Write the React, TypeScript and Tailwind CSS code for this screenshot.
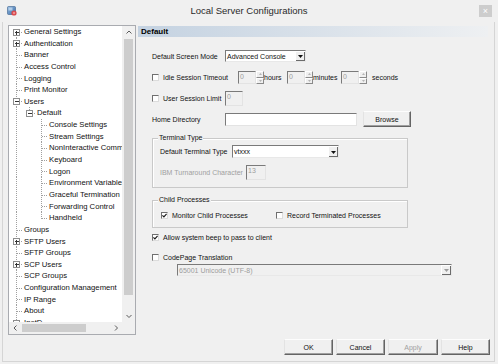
import React from "react";

type Node = { label: string; level: 0 | 1 | 2; exp?: "+" | "-"; last?: boolean };

const rows: Node[] = [
  { label: "General Settings", level: 0, exp: "+" },
  { label: "Authentication", level: 0, exp: "+" },
  { label: "Banner", level: 0 },
  { label: "Access Control", level: 0 },
  { label: "Logging", level: 0 },
  { label: "Print Monitor", level: 0 },
  { label: "Users", level: 0, exp: "-" },
  { label: "Default", level: 1, exp: "-", last: true },
  { label: "Console Settings", level: 2 },
  { label: "Stream Settings", level: 2 },
  { label: "NonInteractive Commands", level: 2 },
  { label: "Keyboard", level: 2 },
  { label: "Logon", level: 2 },
  { label: "Environment Variables", level: 2 },
  { label: "Graceful Termination", level: 2 },
  { label: "Forwarding Control", level: 2 },
  { label: "Handheld", level: 2, last: true },
  { label: "Groups", level: 0 },
  { label: "SFTP Users", level: 0, exp: "+" },
  { label: "SFTP Groups", level: 0 },
  { label: "SCP Users", level: 0, exp: "+" },
  { label: "SCP Groups", level: 0 },
  { label: "Configuration Management", level: 0 },
  { label: "IP Range", level: 0 },
  { label: "About", level: 0 },
  { label: "InetD", level: 0, exp: "+" },
];

const RH = 11.64;

function TreeRow({ node, i, h }: { node: Node; i: number; h: number }) {
  const { label, level, exp } = node;
  const mid = Math.floor(h / 2) + 0.5;
  const X = [7.5, 20.5, 32.5];
  const W = [13, 26, 38];
  const w = W[level];
  const xc = X[level];
  const dot = { stroke: "#a0a0a0", strokeDasharray: "1 1", strokeWidth: 1 } as const;
  return (
    <div className="flex items-center whitespace-nowrap" style={{ height: h }}>
      <svg width={w} height={h} className="shrink-0" shapeRendering="crispEdges">
        <line x1={X[0]} y1={i === 0 ? mid : 0} x2={X[0]} y2={h} {...dot} />
        {level === 1 && <line x1={X[1]} y1={0} x2={X[1]} y2={mid} {...dot} />}
        {level === 2 && <line x1={X[2]} y1={0} x2={X[2]} y2={node.last ? mid : h} {...dot} />}
        <line x1={xc} y1={mid} x2={w} y2={mid} {...dot} />
        {exp && (
          <g>
            <rect x={xc - 3} y={mid - 3} width={6} height={6} fill="#fff" stroke="#8e8e8e" />
            <line x1={xc - 2} y1={mid} x2={xc + 2} y2={mid} stroke="#333" />
            {exp === "+" && <line x1={xc} y1={mid - 2} x2={xc} y2={mid + 2} stroke="#333" />}
          </g>
        )}
      </svg>
      <span className="ml-[2px] leading-none">{label}</span>
    </div>
  );
}

function Chevron({ dir }: { dir: "up" | "down" | "left" | "right" }) {
  const d =
    dir === "up"
      ? "M0.5 3.5 L3 1 L5.5 3.5"
      : dir === "down"
      ? "M0.5 1 L3 3.5 L5.5 1"
      : dir === "left"
      ? "M3.5 0.5 L1 3 L3.5 5.5"
      : "M1 0.5 L3.5 3 L1 5.5";
  const vert = dir === "up" || dir === "down";
  return (
    <svg width={vert ? 6 : 5} height={vert ? 5 : 6}>
      <path d={d} fill="none" stroke="#5a5a5a" strokeWidth="1" />
    </svg>
  );
}

function Tree() {
  const heights = rows.map((_, i) => Math.round((i + 1) * RH) - Math.round(i * RH));
  return (
    <div className="w-[128px] h-[310px] shrink-0 border border-[#a9abb0] bg-white flex flex-col text-[7.7px] text-[#111]">
      <div className="flex h-[296px]">
        <div className="w-[113px] overflow-hidden">
          {rows.map((n, i) => (
            <TreeRow key={i} node={n} i={i} h={heights[i]} />
          ))}
        </div>
        <div className="w-[13px] bg-[#f0f0f0] flex flex-col">
          <div className="h-[12px] flex items-center justify-center">
            <Chevron dir="up" />
          </div>
          <div className="flex-1">
            <div className="mt-[1px] mx-[2px] h-[256px] bg-[#cdcdcd]" />
          </div>
          <div className="h-[12px] flex items-center justify-center">
            <Chevron dir="down" />
          </div>
        </div>
      </div>
      <div className="flex h-[12px] bg-[#f0f0f0]">
        <div className="w-[113px] flex items-center">
          <div className="w-[12px] flex justify-center">
            <Chevron dir="left" />
          </div>
          <div className="ml-[1px] w-[64px] h-[8px] bg-[#cdcdcd]" />
          <div className="flex-1" />
          <div className="w-[12px] flex justify-center">
            <Chevron dir="right" />
          </div>
        </div>
        <div className="w-[13px]" />
      </div>
    </div>
  );
}

function Checkbox({ checked }: { checked?: boolean }) {
  return (
    <span className="w-[7px] h-[7px] shrink-0 bg-white border border-t-[#6f6f6f] border-l-[#6f6f6f] border-r-[#dcdcdc] border-b-[#dcdcdc] flex items-center justify-center">
      {checked && (
        <svg width="5" height="5" viewBox="0 0 5 5">
          <path d="M0.4 2.4 L1.9 3.9 L4.6 0.8" fill="none" stroke="#1a1a1a" strokeWidth="1.2" />
        </svg>
      )}
    </span>
  );
}

function Select({ cls, value, disabled }: { cls: string; value: string; disabled?: boolean }) {
  return (
    <div
      className={`${cls} flex border border-t-[#7a7a7a] border-l-[#7a7a7a] border-r-[#e8e8e8] border-b-[#e8e8e8] ${
        disabled ? "bg-[#f0f0f0]" : "bg-white"
      }`}
    >
      <span
        className={`flex-1 overflow-hidden whitespace-nowrap pl-[1px] flex items-center leading-none ${
          disabled ? "text-[#9d9d9d]" : "text-[#111]"
        }`}
      >
        {value}
      </span>
      <span className="w-[10px] h-full flex items-center justify-center bg-[#f0f0f0] border-t border-l border-t-white border-l-white shadow-[inset_-1px_-1px_0_#6b6b6b]">
        <svg width="5" height="3" viewBox="0 0 5 3">
          <path d="M0 0 H5 L2.5 3 Z" fill={disabled ? "#9d9d9d" : "#111"} />
        </svg>
      </span>
    </div>
  );
}

function Input({ cls, value, disabled }: { cls: string; value?: string; disabled?: boolean }) {
  return (
    <div
      className={`${cls} shrink-0 border border-t-[#7a7a7a] border-l-[#7a7a7a] border-r-[#e3e3e3] border-b-[#e3e3e3] pl-[1px] pt-[1px] leading-none ${
        disabled ? "bg-[#f0f0f0] text-[#9d9d9d]" : "bg-white text-[#111]"
      }`}
    >
      {value}
    </div>
  );
}

function Spin() {
  return (
    <div className="w-[26px] h-[13px] flex shrink-0">
      <Input cls="w-[18px] h-[13px]" value="0" disabled />
      <div className="w-[8px] h-[13px] flex flex-col">
        <div className="h-[6.5px] border border-t-white border-l-white border-r-[#8a8a8a] border-b-[#8a8a8a] bg-[#f0f0f0] flex items-center justify-center">
          <svg width="3" height="2" viewBox="0 0 3 2">
            <path d="M0 2 L1.5 0 L3 2 Z" fill="#b5b5b5" />
          </svg>
        </div>
        <div className="h-[6.5px] border border-t-white border-l-white border-r-[#8a8a8a] border-b-[#8a8a8a] bg-[#f0f0f0] flex items-center justify-center">
          <svg width="3" height="2" viewBox="0 0 3 2">
            <path d="M0 0 H3 L1.5 2 Z" fill="#b5b5b5" />
          </svg>
        </div>
      </div>
    </div>
  );
}

function Button({ cls, label, disabled }: { cls: string; label: string; disabled?: boolean }) {
  return (
    <div
      className={`${cls} shrink-0 bg-[#f0f0f0] border border-t-[#fdfdfd] border-l-[#e3e3e3] border-r-[#646464] border-b-[#646464] shadow-[inset_-1px_-1px_0_#a0a0a0] flex items-center justify-center text-[7px] leading-none ${
        disabled ? "text-[#a0a0a0]" : "text-[#111]"
      }`}
    >
      {label}
    </div>
  );
}

function AppIcon() {
  return (
    <svg width="10" height="10" viewBox="0 0 10 10">
      <defs>
        <linearGradient id="ig" x1="0" y1="0" x2="1" y2="1">
          <stop offset="0" stopColor="#8fb7e0" />
          <stop offset="1" stopColor="#3e6fa8" />
        </linearGradient>
      </defs>
      <rect x="0.5" y="0.5" width="8" height="8" rx="1" fill="url(#ig)" stroke="#3a5f8c" strokeWidth="0.6" />
      <rect x="1.5" y="1.5" width="4" height="3" fill="#cfe2f5" opacity="0.7" />
      <circle cx="7" cy="7" r="2.6" fill="#d9464a" />
      <path d="M5.8 7 H8.2 M7 5.8 V8.2" stroke="#f7c0c0" strokeWidth="0.7" />
    </svg>
  );
}

export default function App() {
  return (
    <div className="w-[498px] h-[364px] bg-[#f0f0f0] flex flex-col overflow-hidden font-['Liberation_Sans',Arial,sans-serif] text-[#111]">
      <div className="h-[22px] shrink-0 grid grid-cols-[1fr_auto_1fr] items-center">
        <div className="pl-[7px] flex items-center">
          <AppIcon />
        </div>
        <div className="text-[9.5px] text-[#2a2a2a] leading-none">Local Server Configurations</div>
        <div className="flex justify-end pr-[6px]">
          <div className="w-[13px] h-[12px] bg-[#cdcdcd] text-white text-[9px] leading-[12px] text-center">
            ×
          </div>
        </div>
      </div>

      <div className="ml-[2px] w-[493px] h-[340px] border-x border-b border-[#d5d5d5] flex flex-col pl-[5px] pt-[3px]">
        <div className="flex">
          <Tree />
          <div className="ml-[2px] flex-1 flex flex-col">
            <div className="mt-[1px] w-[350px] h-[11px] bg-linear-to-r from-[#c4d2e1] to-[#eef0f2] pl-[3px] text-[8px] font-bold leading-[11px] text-black">
              Default
            </div>

            <div className="pl-[14px] flex flex-col text-[7px] leading-none">
              <div className="mt-[13px] h-[12px] flex items-center">
                <span className="w-[73px]">Default Screen Mode</span>
                <Select cls="w-[81px] h-[12px]" value="Advanced Console" />
              </div>

              <div className="mt-[9px] h-[13px] flex items-center">
                <div className="w-[86px] flex items-center gap-[4px]">
                  <Checkbox />
                  <span>Idle Session Timeout</span>
                </div>
                <Spin />
                <span className="w-[23px]">hours</span>
                <Spin />
                <span className="w-[28px]">minutes</span>
                <Spin />
                <span className="pl-[5px]">seconds</span>
              </div>

              <div className="mt-[7px] h-[15px] flex items-center">
                <div className="w-[73px] flex items-center gap-[4px]">
                  <Checkbox />
                  <span>User Session Limit</span>
                </div>
                <Input cls="w-[18px] h-[15px]" value="0" disabled />
              </div>

              <div className="mt-[5px] h-[16px] flex items-center">
                <span className="w-[73px]">Home Directory</span>
                <Input cls="w-[132px] h-[13px]" />
                <Button cls="ml-[6px] w-[48px] h-[16px]" label="Browse" />
              </div>

              <fieldset className="mt-[7px] w-[256px] border border-[#c9c9c9] pb-[7px] shadow-[inset_1px_1px_0_#ffffff]">
                <legend className="ml-[5px] px-[1px] leading-[8px] bg-[#f0f0f0]">Terminal Type</legend>
                <div className="pl-[7px] flex flex-col">
                  <div className="mt-[3px] h-[13px] flex items-center">
                    <span className="w-[72px]">Default Terminal Type</span>
                    <Select cls="w-[107px] h-[13px]" value="vtxxx" />
                  </div>
                  <div className="mt-[7px] h-[15px] flex items-center">
                    <span className="w-[86px] text-[#a0a0a0]">IBM Turnaround Character</span>
                    <Input cls="w-[20px] h-[15px]" value="13" disabled />
                  </div>
                </div>
              </fieldset>

              <fieldset className="mt-[8px] w-[256px] border border-[#c9c9c9] pb-[5px] shadow-[inset_1px_1px_0_#ffffff]">
                <legend className="ml-[5px] px-[1px] leading-[8px] bg-[#f0f0f0]">Child Processes</legend>
                <div className="pl-[8px] mt-[5px] h-[13px] flex items-center">
                  <div className="w-[115px] flex items-center gap-[4px]">
                    <Checkbox checked />
                    <span>Monitor Child Processes</span>
                  </div>
                  <div className="flex items-center gap-[4px]">
                    <Checkbox />
                    <span>Record Terminated Processes</span>
                  </div>
                </div>
              </fieldset>

              <div className="mt-[3px] h-[12px] flex items-center gap-[4px]">
                <Checkbox checked />
                <span>Allow system beep to pass to client</span>
              </div>

              <div className="mt-[8px] h-[12px] flex items-center gap-[4px]">
                <Checkbox />
                <span>CodePage Translation</span>
              </div>
              <Select cls="mt-[1px] ml-[25px] w-[275px] h-[12px]" value="65001 Unicode (UTF-8)" disabled />
            </div>
          </div>
        </div>

        <div className="mt-[4px] pr-[4px] flex justify-end gap-[3px]">
          <Button cls="w-[49px] h-[16px]" label="OK" />
          <Button cls="w-[49px] h-[16px]" label="Cancel" />
          <Button cls="w-[50px] h-[16px]" label="Apply" disabled />
          <Button cls="w-[49px] h-[16px]" label="Help" />
        </div>
      </div>
    </div>
  );
}
